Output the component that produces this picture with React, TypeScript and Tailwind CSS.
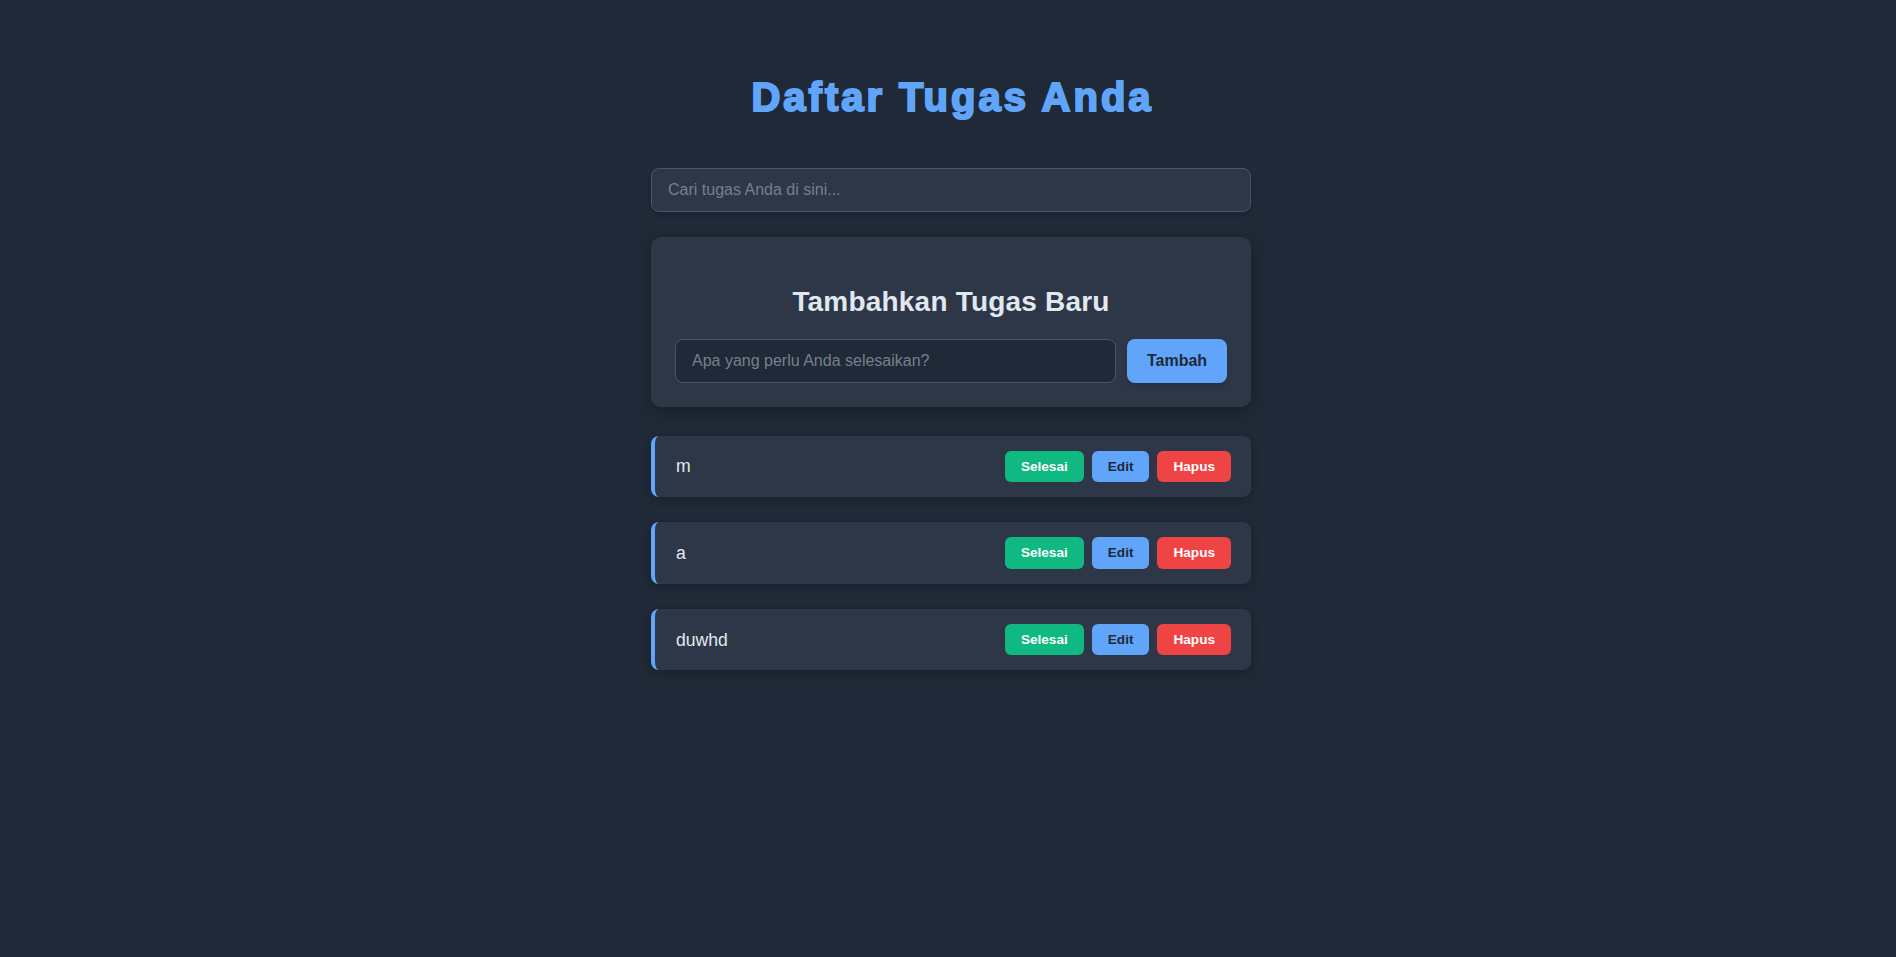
import React, { useState } from 'react';

type Task = { id: number; text: string };

const initialTasks: Task[] = [
  { id: 1, text: 'm' },
  { id: 2, text: 'a' },
  { id: 3, text: 'duwhd' },
];

export default function App() {
  const [tasks, setTasks] = useState<Task[]>(initialTasks);
  const [query, setQuery] = useState('');
  const [draft, setDraft] = useState('');

  const add = () => {
    if (!draft.trim()) return;
    setTasks([...tasks, { id: Date.now(), text: draft.trim() }]);
    setDraft('');
  };

  const shown = tasks.filter((t) => t.text.toLowerCase().includes(query.toLowerCase()));

  return (
    <div className="min-h-screen bg-[#1f2937] pl-[6px] font-['Liberation_Sans',Arial,sans-serif]">
      <div className="mx-auto w-[600px] pt-[73px]">
        <h1 className="mb-[47px] pl-[3px] text-center text-[40px] leading-[1.2] font-bold tracking-[3px] text-[#60a5fa] [-webkit-text-stroke:2px_#60a5fa]">
          Daftar Tugas Anda
        </h1>

        <input
          className="mb-[25px] block h-[44px] w-full rounded-lg border border-[#4a5568] bg-[#2d3748] px-4 text-base text-[#e2e8f0] shadow-md outline-none placeholder:text-[#787f8c]"
          placeholder="Cari tugas Anda di sini..."
          value={query}
          onChange={(e) => setQuery(e.target.value)}
        />

        <div className="mb-[29px] rounded-[10px] bg-[#2d3748] p-6 shadow-[0_4px_14px_rgba(0,0,0,0.25)]">
          <h2 className="mt-6 mb-5 text-center text-[28px] leading-[1.2] font-bold tracking-[0.2px] text-[#e2e8f0]">
            Tambahkan Tugas Baru
          </h2>
          <div className="flex gap-[11px]">
            <input
              className="h-[44px] flex-1 rounded-lg border border-[#4a5568] bg-[#1f2937] px-4 text-base text-[#e2e8f0] outline-none placeholder:text-[#787f8c]"
              placeholder="Apa yang perlu Anda selesaikan?"
              value={draft}
              onChange={(e) => setDraft(e.target.value)}
            />
            <button
              className="h-[44px] w-[100px] rounded-lg bg-[#60a5fa] text-base font-bold text-[#1f2937] shadow-md"
              onClick={add}
            >
              Tambah
            </button>
          </div>
        </div>

        <ul className="flex flex-col gap-[25px]">
          {shown.map((t) => (
            <li
              key={t.id}
              className="flex items-center justify-between rounded-lg border-l-4 border-[#60a5fa] bg-[#2d3748] px-5 py-[15px] shadow-[0_3px_10px_rgba(0,0,0,0.2)]"
            >
              <span className="pl-px text-[17.6px] leading-[1.15] text-[#e2e8f0]">{t.text}</span>
              <div className="flex gap-2">
                <button className="rounded-md bg-[#10b981] px-4 py-2 text-[13.6px] leading-[1.15] font-bold text-white">
                  Selesai
                </button>
                <button className="rounded-md bg-[#60a5fa] px-4 py-2 text-[13.6px] leading-[1.15] font-bold text-[#1f2937]">
                  Edit
                </button>
                <button
                  className="rounded-md bg-[#ef4444] px-4 py-2 text-[13.6px] leading-[1.15] font-bold text-white"
                  onClick={() => setTasks(tasks.filter((x) => x.id !== t.id))}
                >
                  Hapus
                </button>
              </div>
            </li>
          ))}
        </ul>
      </div>
    </div>
  );
}
